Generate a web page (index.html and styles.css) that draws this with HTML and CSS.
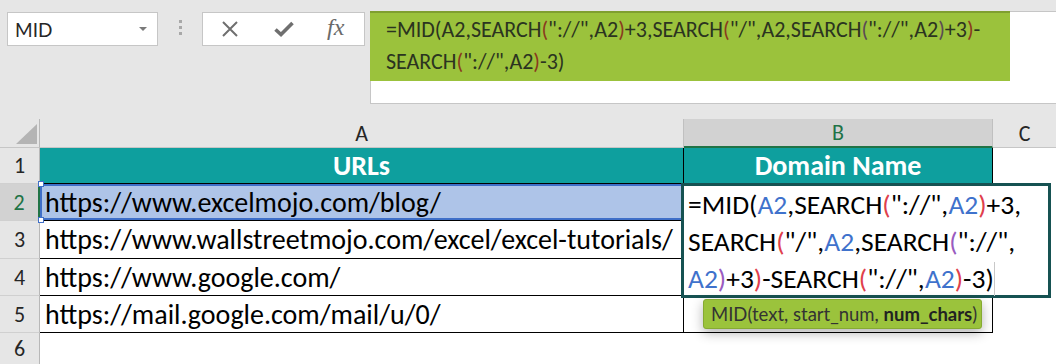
FILE: index.html
```html
<!DOCTYPE html>
<html>
<head>
<meta charset="utf-8">
<link rel="stylesheet" href="styles.css">
</head>
<body>
<div class="app">
  <div class="toolbar">
    <div class="namebox"><span class="name">MID</span><span class="dd"></span></div>
    <div class="grip"><i></i><i></i><i></i></div>
    <div class="fbuttons">
      <svg class="ic-x" width="18" height="16" viewBox="0 0 18 16"><path d="M2 1 L16 15 M16 1 L2 15" stroke="#6f6f6f" stroke-width="2" fill="none"/></svg>
      <svg class="ic-ok" width="20" height="16" viewBox="0 0 20 16"><path d="M1.5 8.5 L7 13.5 L18.5 2" stroke="#6f6f6f" stroke-width="3.6" fill="none"/></svg>
      <span class="fx">fx</span>
    </div>
    <div class="fbar">
      <div class="fhl">=MID(A2,SEARCH<span class="fp">(</span>"://",A2<span class="fp">)</span>+3,SEARCH<span class="fp">(</span>"/",A2,SEARCH<span class="fq">(</span>"://",A2<span class="fq">)</span>+3<span class="fp">)</span>-<br>SEARCH<span class="fp">(</span>"://",A2<span class="fp">)</span>-3)</div>
    </div>
  </div>
  <div class="sheet">
    <div class="corner"><svg width="21" height="20" viewBox="0 0 21 20"><polygon points="21,0 21,20 0,20" fill="#b4b4b4"/></svg></div>
    <div class="ch">A</div>
    <div class="ch ch-sel">B</div>
    <div class="ch ch-c">C</div>

    <div class="rh">1</div>
    <div class="c head">URLs</div>
    <div class="c head">Domain Name</div>
    <div class="cc"></div>

    <div class="rh rh-sel">2</div>
    <div class="c sel">https://www.excelmojo.com/blog/<i class="hd hd-tl"></i><i class="hd hd-bl"></i></div>
    <div class="c"></div>
    <div class="cc"></div>

    <div class="rh">3</div>
    <div class="c">https://www.wallstreetmojo.com/excel/excel-tutorials/</div>
    <div class="c"></div>
    <div class="cc"></div>

    <div class="rh">4</div>
    <div class="c">https://www.google.com/</div>
    <div class="c"></div>
    <div class="cc"></div>

    <div class="rh">5</div>
    <div class="c">https://mail.google.com/mail/u/0/</div>
    <div class="c"></div>
    <div class="cc"></div>

    <div class="rh rh-last">6</div>
    <div class="e"></div>
    <div class="e"></div>
    <div class="cc"></div>
  </div>

  <div class="editbox">=MID(<span class="ref">A2</span>,SEARCH<span class="pr">(</span>"://",<span class="ref">A2</span><span class="pr">)</span>+3,<br>SEARCH<span class="pr">(</span>"/",<span class="ref">A2</span>,SEARCH<span class="pp">(</span>"://",<br><span class="ref">A2</span><span class="pp">)</span>+3<span class="pr">)</span>-SEARCH<span class="pr">(</span>"://",<span class="ref">A2</span><span class="pr">)</span>-3)<span class="caret"></span></div>

  <div class="tip">MID(text, start_num, <b>num_chars</b>)</div>
</div>
</body>
</html>
```
FILE: styles.css
```css
html, body {
  margin: 0;
  padding: 0;
}
body {
  background: #e6e6e6;
  font-family: Carlito, Lato, "Noto Sans", sans-serif;
}
.app {
  position: relative;
  width: 1056px;
  height: 364px;
  overflow: hidden;
}
.toolbar {
  display: flex;
  align-items: flex-start;
  height: 119px;
  padding-top: 11px;
  box-sizing: border-box;
}
.namebox {
  margin: 1px 0 0 7px;
  width: 151px;
  height: 34px;
  box-sizing: border-box;
  background: #fff;
  border: 1px solid #c6c6c6;
  display: flex;
  align-items: center;
  justify-content: space-between;
  padding: 0 10px 0 7px;
}
.name {
  font-family: Lato, "Noto Sans", sans-serif;
  font-size: 19px;
  color: #262626;
}
.dd {
  width: 0;
  height: 0;
  border-left: 4px solid transparent;
  border-right: 4px solid transparent;
  border-top: 4px solid #7a7a7a;
}
.grip {
  margin: 9px 0 0 21px;
  display: flex;
  flex-direction: column;
  gap: 3px;
}
.grip i {
  display: block;
  width: 3px;
  height: 3px;
  background: #a8a8a8;
}
.fbuttons {
  margin: 1px 0 0 20px;
  width: 163px;
  height: 34px;
  box-sizing: border-box;
  background: #fff;
  border: 1px solid #c6c6c6;
  display: flex;
  align-items: center;
  padding-left: 18px;
}
.ic-ok {
  margin-left: 35px;
}
.fx {
  margin-left: 33px;
  font-family: "Liberation Serif", serif;
  font-style: italic;
  font-size: 24px;
  color: #6a6a6a;
  margin-top: -3px;
}
.fbar {
  margin-left: 5px;
  flex: 1;
  height: 93px;
  background: #fff;
  border: 1px solid #c6c6c6;
  border-right: 0;
  box-sizing: border-box;
}
.fhl {
  margin: -1px 0 0 -1px;
  width: 640px;
  height: 70px;
  box-sizing: border-box;
  background: #9bc23c;
  border-top: 2px solid #7f9f30;
  padding: 1px 0 0 16px;
  font-size: 22px;
  line-height: 32px;
  color: #2b3420;
  white-space: nowrap;
}
.fp { color: #8a3a1e; }
.fq { color: #5a4a55; }

.sheet {
  display: grid;
  grid-template-columns: 40px 644px 309px 1fr;
  grid-template-rows: 29px 36px 37px 38px 37px 37px 1fr;
  height: 245px;
  background: #fff;
}
.corner {
  background: #e6e6e6;
  border-right: 1px solid #b8b8b8;
  border-bottom: 1px solid #c6c6c6;
  display: flex;
  align-items: flex-end;
  justify-content: flex-end;
  padding: 0 2px 3px 0;
}
.corner svg { display: block; }
.ch {
  background: #e6e6e6;
  border-right: 1px solid #c0c0c0;
  border-bottom: 1px solid #c6c6c6;
  display: flex;
  align-items: center;
  justify-content: center;
  font-size: 22px;
  color: #262626;
}
.ch-sel {
  background: #d2d2d2;
  border-bottom: 2px solid #217346;
  color: #217346;
}
.ch-c {
  border-right: 0;
}
.rh {
  background: #e6e6e6;
  border-right: 1px solid #b8b8b8;
  border-bottom: 1px solid #d0d0d0;
  display: flex;
  align-items: center;
  justify-content: center;
  font-size: 22px;
  color: #262626;
}
.rh-sel {
  background: #d2d2d2;
  border-right: 2px solid #217346;
  color: #217346;
}
.rh-last { border-bottom: 0; }
.c {
  position: relative;
  border-right: 1px solid #000;
  border-bottom: 1px solid #000;
  display: flex;
  align-items: center;
  padding-left: 5px;
  font-size: 28px;
  color: #000;
  white-space: nowrap;
}
.head {
  background: #0e9f9e;
  color: #fff;
  font-weight: bold;
  justify-content: center;
  padding-left: 0;
}
.sel {
  background: #aec4e8;
  box-shadow: inset 0 2px 0 #3f6fc8, inset 0 -2px 0 #3f6fc8, inset 2px 0 0 #3f6fc8;
}
.hd {
  position: absolute;
  width: 4px;
  height: 4px;
  background: #fff;
  border: 1px solid #3f6fc8;
}
.hd-tl { left: -2px; top: -3px; }
.hd-bl { left: -2px; bottom: -3px; }
.cc, .e { background: #fff; }

.editbox {
  position: absolute;
  left: 681px;
  top: 183px;
  width: 370px;
  height: 115px;
  box-sizing: border-box;
  border: 3px solid #165252;
  background: #fff;
  padding: 0 0 0 4px;
  font-size: 27.5px;
  line-height: 37px;
  color: #000;
  white-space: nowrap;
}
.ref { color: #3f72cc; }
.pr { color: #e0404c; }
.pp { color: #9a5bc0; }
.caret {
  display: inline-block;
  width: 1px;
  height: 34px;
  background: #c8c8c8;
  vertical-align: -8px;
}
.tip {
  position: absolute;
  left: 703px;
  top: 299px;
  width: 279px;
  height: 30px;
  box-sizing: border-box;
  background: #9bc33c;
  border: 1px solid #86aa32;
  border-radius: 3px;
  box-shadow: 0 4px 12px rgba(0, 0, 0, 0.3);
  padding-left: 7px;
  font-family: Lato, "Noto Sans", sans-serif;
  font-size: 18.5px;
  line-height: 28px;
  color: #333;
  white-space: nowrap;
}
.tip b { color: #222; }
```
